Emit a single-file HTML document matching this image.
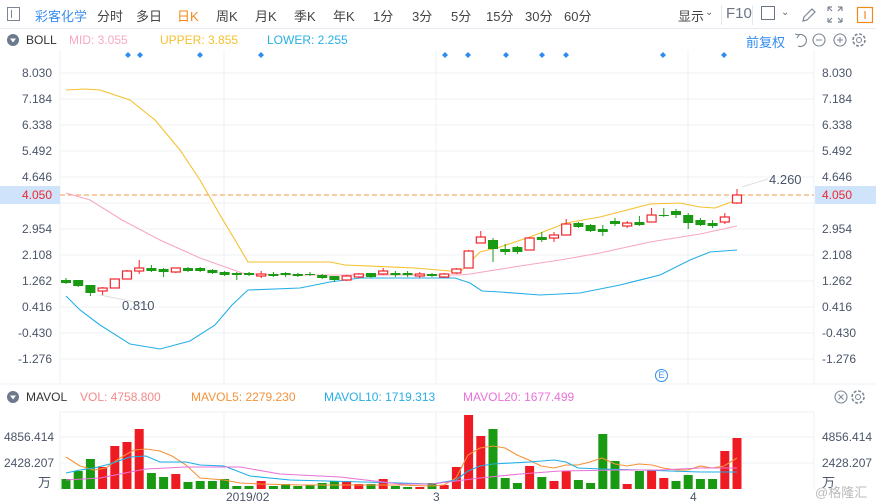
<!DOCTYPE html>
<html><head><meta charset="utf-8">
<style>
*{margin:0;padding:0;box-sizing:border-box}
body{width:876px;height:504px;overflow:hidden;background:#fff;font-family:"Liberation Sans","Noto Sans CJK SC",sans-serif;position:relative;color:#333}
.a{position:absolute;white-space:nowrap}
.top{font-size:13px;color:#444;top:6px}
.ax{font-size:12px;color:#4a5568}
.l{right:824px;text-align:right}
</style></head><body>
<!-- top bar -->
<div class="a" style="left:0;top:28px;width:876px;height:1px;background:#e6eaf0"></div>
<div class="a" style="left:7px;top:7px;width:13px;height:14px;border:1px solid #7b8694"></div>
<div class="a" style="left:11px;top:10px;width:1px;height:8px;background:#7b8694"></div>
<div class="a top" style="left:35px;color:#3b8ff0">彩客化学</div>
<div class="a top" style="left:97px">分时</div>
<div class="a top" style="left:136px">多日</div>
<div class="a top" style="left:177px;color:#f08a1c">日K</div>
<div class="a top" style="left:216px">周K</div>
<div class="a top" style="left:255px">月K</div>
<div class="a top" style="left:294px">季K</div>
<div class="a top" style="left:333px">年K</div>
<div class="a top" style="left:373px">1分</div>
<div class="a top" style="left:412px">3分</div>
<div class="a top" style="left:451px">5分</div>
<div class="a top" style="left:486px">15分</div>
<div class="a top" style="left:525px">30分</div>
<div class="a top" style="left:564px">60分</div>
<div class="a top" style="left:678px">显示</div>
<div class="a" style="left:705px;top:7px;font-size:10px;color:#666">⌄</div>
<div class="a" style="left:721px;top:5px;width:1px;height:20px;background:#e6eaf0"></div>
<div class="a top" style="left:726px;font-size:15px;top:5px;color:#6b7684">F10</div>
<div class="a" style="left:752px;top:5px;width:1px;height:20px;background:#e6eaf0"></div>
<div class="a" style="left:761px;top:6px;width:14px;height:14px;border:1px solid #6b7684"></div>
<div class="a" style="left:781px;top:7px;font-size:10px;color:#666">⌄</div>
<svg class="a" style="left:800px;top:4px" width="76" height="22">
<path d="M3 17 L4 13 L12 5 L15 8 L7 16 Z" fill="none" stroke="#7b8694" stroke-width="1.2"/>
<path d="M28 3v4M28 3h4M42 3h-4M42 3v4M28 18v-4M28 18h4M42 18h-4M42 18v-4M28 3l4 4M42 3l-4 4M28 18l4-4M42 18l-4-4" stroke="#7b8694" stroke-width="1.2" fill="none"/>
<rect x="57.5" y="3.5" width="15" height="15" fill="none" stroke="#f08a1c" stroke-width="1.2"/>
<line x1="65" y1="7" x2="65" y2="15" stroke="#f08a1c" stroke-width="1.2"/>
</svg>
<!-- BOLL row -->
<svg class="a" style="left:6px;top:33px" width="14" height="14"><circle cx="7" cy="7" r="6" fill="#6c7a8c"/><path d="M4 5.5h6L7 9.5z" fill="#fff"/></svg>
<div class="a" style="left:26px;top:33px;font-size:12px;color:#333">BOLL</div>
<div class="a" style="left:69px;top:33px;font-size:12px;color:#f7a8c2">MID: 3.055</div>
<div class="a" style="left:160px;top:33px;font-size:12px;color:#f5c12e">UPPER: 3.855</div>
<div class="a" style="left:267px;top:33px;font-size:12px;color:#27aee6">LOWER: 2.255</div>
<div class="a" style="left:746px;top:32px;font-size:13px;color:#2f8cf0">前复权</div>
<svg class="a" style="left:792px;top:31px" width="84" height="18">
<path d="M6 4 A6 6 0 1 1 6 15" fill="none" stroke="#7b8694" stroke-width="1.1"/><path d="M3 3 L7 4 L5 7" fill="none" stroke="#7b8694" stroke-width="1.1"/>
<circle cx="27" cy="9" r="6" fill="none" stroke="#7b8694" stroke-width="1.1"/><line x1="24" y1="9" x2="30" y2="9" stroke="#7b8694"/>
<circle cx="48" cy="9" r="6" fill="none" stroke="#7b8694" stroke-width="1.1"/><line x1="45" y1="9" x2="51" y2="9" stroke="#7b8694"/><line x1="48" y1="6" x2="48" y2="12" stroke="#7b8694"/>
<circle cx="67" cy="9" r="6" fill="none" stroke="#7b8694" stroke-width="1.6" stroke-dasharray="3 1.7"/><circle cx="67" cy="9" r="2.5" fill="none" stroke="#7b8694"/>
</svg>
<svg id="main" class="a" style="left:0;top:0" width="876" height="504"></svg>
<!-- axis labels -->
<div class="a" style="left:0;top:186px;width:60px;height:18px;background:#cfe4fb"></div>
<div class="a" style="left:815px;top:186px;width:61px;height:18px;background:#cfe4fb"></div>
<div id="labs"></div>
<div class="a ax" style="left:122px;top:298px;font-size:13px">0.810</div>
<div class="a ax" style="left:769px;top:172px;font-size:13px">4.260</div>
<!-- MAVOL row -->
<svg class="a" style="left:6px;top:390px" width="14" height="14"><circle cx="7" cy="7" r="6" fill="#6c7a8c"/><path d="M4 5.5h6L7 9.5z" fill="#fff"/></svg>
<div class="a" style="left:26px;top:390px;font-size:12px;color:#333">MAVOL</div>
<div class="a" style="left:80px;top:390px;font-size:12px;color:#f48a8a">VOL: 4758.800</div>
<div class="a" style="left:191px;top:390px;font-size:12px;color:#f5923a">MAVOL5: 2279.230</div>
<div class="a" style="left:324px;top:390px;font-size:12px;color:#27aee6">MAVOL10: 1719.313</div>
<div class="a" style="left:463px;top:390px;font-size:12px;color:#e872d8">MAVOL20: 1677.499</div>
<svg class="a" style="left:832px;top:388px" width="44" height="18">
<circle cx="9" cy="9" r="6" fill="none" stroke="#7b8694" stroke-width="1.1"/><path d="M6.5 6.5l5 5M11.5 6.5l-5 5" stroke="#7b8694"/>
<circle cx="26" cy="9" r="6" fill="none" stroke="#7b8694" stroke-width="1.6" stroke-dasharray="3 1.7"/><circle cx="26" cy="9" r="2.5" fill="none" stroke="#7b8694"/>
</svg>
<div class="a ax" style="left:4px;top:430px">4856.414</div>
<div class="a ax" style="left:4px;top:456px">2428.207</div>
<div class="a ax" style="left:38px;top:472px;font-size:13px">万</div>
<div class="a ax" style="left:822px;top:430px">4856.414</div>
<div class="a ax" style="left:822px;top:456px">2428.207</div>
<div class="a ax" style="left:822px;top:472px;font-size:13px">万</div>
<div class="a ax" style="left:226px;top:490px">2019/02</div>
<div class="a ax" style="left:433px;top:490px">3</div>
<div class="a ax" style="left:690px;top:490px">4</div>
<div class="a" style="left:815px;top:482px;font-size:13px;color:#bbb">@格隆汇</div>
<div class="a" style="left:655px;top:369px;width:13px;height:13px;border:1px solid #2f8cf0;border-radius:50%;font-size:9px;color:#2f8cf0;text-align:center;line-height:11px">E</div>
<script>
var S='',ns='';
function X(i){return 66+12.2*i}
// grid
var labs=['8.030','7.184','6.338','5.492','4.646','3.800','2.954','2.108','1.262','0.416','-0.430','-1.276'];
var L='';
for(var k=0;k<12;k++){var y=73+26*k;S+='<line x1="60" x2="814" y1="'+y+'" y2="'+y+'" stroke="#eef1f5"/>';
 if(k!=5){L+='<div class="a ax" style="right:824px;top:'+(y-7)+'px">'+labs[k]+'</div><div class="a ax" style="left:822px;top:'+(y-7)+'px">'+labs[k]+'</div>';}}
L+='<div class="a" style="right:824px;top:188px;font-size:12px;color:#f0262b">4.050</div><div class="a" style="left:822px;top:188px;font-size:12px;color:#f0262b">4.050</div>';
document.getElementById('labs').innerHTML=L;
[60,224,436,688,814].forEach(function(x){S+='<line x1="'+x+'" x2="'+x+'" y1="50" y2="384" stroke="#eef1f5"/><line x1="'+x+'" x2="'+x+'" y1="412" y2="490" stroke="#eef1f5"/>'});
S+='<line x1="0" x2="876" y1="384" y2="384" stroke="#eef1f5"/><line x1="60" x2="814" y1="437" y2="437" stroke="#eef1f5"/><line x1="60" x2="814" y1="463" y2="463" stroke="#eef1f5"/><line x1="60" x2="814" y1="412" y2="412" stroke="#eef1f5"/>';
// dashed
S+='<line x1="60" x2="814" y1="195" y2="195" stroke="#f09a4a" stroke-dasharray="5 3"/>';
S+='<line x1="100" y1="295" x2="150" y2="305" stroke="#ddd"/><line x1="742" y1="187" x2="768" y2="179" stroke="#ddd"/>';
// diamonds
[128,140,200,261,445,468,506,542,566,663,724].forEach(function(x){S+='<path d="M'+x+' 52l3 3-3 3-3-3z" fill="#2f8cf0"/>'});
function pl(pts,c){S+='<polyline fill="none" stroke="'+c+'" stroke-width="1.1" points="'+pts+'"/>'}
pl('66,90 85,89 100,90 130,100 155,120 180,150 200,180 220,215 235,240 248,262 330,262 345,265 415,268 450,271 462,270 470,262 480,252 500,247 530,237 566,223 600,217 650,204 680,203 700,207 715,208 737,200','#f5c12e');
pl('66,193 90,200 122,220 160,240 200,258 228,268 245,274 300,275 460,275 470,274 520,266 560,260 600,253 650,242 700,234 737,226','#f7a8c2');
pl('66,296 80,310 100,325 130,344 160,349 190,341 215,325 232,305 248,290 300,288 330,282 360,278 455,278 470,283 482,291 500,292 540,295 580,293 620,285 660,275 690,260 710,252 737,250','#27aee6');
// candles: [type(r/g), top, bottom, wickTop, wickBot]
var C=[['g',280,283,278,284],['g',280,286,280,287],['g',285,293,285,296],['r',288,291,287,295],['r',279,288,279,288],['r',271,279,270,279],['r',268,271,260,274],['g',268,271,265,272],['g',269,272,268,277],['r',268,272,268,273],['g',268,271,267,272],['g',268,271,267,272],['g',270,273,269,274],['g',272,275,271,276],['g',273,275,272,280],['g',273,275,272,276],['r',274,276,271,278],['g',274,276,272,277],['g',273,275,272,277],['g',274,276,273,277],['g',274,275,272,276],['g',275,278,274,279],['g',276,280,276,282],['r',276,280,275,281],['r',274,277,273,278],['g',273,277,273,278],['r',271,274,268,275],['g',273,275,271,277],['g',273,275,271,277],['r',274,276,272,278],['g',274,276,273,277],['r',274,277,273,278],['r',269,273,268,274],['r',251,268,250,268],['r',237,243,231,243],['g',240,249,238,262],['g',249,252,244,255],['g',247,252,246,254],['r',238,250,237,250],['g',237,240,232,242],['r',235,238,232,242],['r',224,235,219,235],['g',223,227,222,228],['g',225,231,224,232],['g',229,232,225,236],['g',221,224,218,226],['r',223,226,221,228],['g',222,225,216,226],['r',215,222,208,222],['g',215,216,208,217],['g',211,215,209,218],['g',215,223,213,229],['g',220,225,218,226],['g',223,226,220,228],['r',217,222,213,224],['r',195,203,189,204]];
C.forEach(function(c,i){var x=X(i);var col=c[0]=='r'?'#f0262b':'#1a9a12';
 S+='<line x1="'+x+'" x2="'+x+'" y1="'+c[3]+'" y2="'+c[4]+'" stroke="'+col+'"/>';
 var h=Math.max(c[2]-c[1],1);
 if(c[0]=='r')S+='<rect x="'+(x-4.5)+'" y="'+c[1]+'" width="9" height="'+h+'" fill="#fff" stroke="'+col+'" stroke-width="1.2"/>';
 else S+='<rect x="'+(x-5)+'" y="'+c[1]+'" width="10" height="'+h+'" fill="'+col+'"/>';});
// volume
var V='gggrrrrggrggggggrggggggrrgrggrgrrrrgggrgrrgggggrgrrgggrr'.split('');
var VT=[479,471,459,467,446,442,429,473,477,474,482,481,481,479,486,486,481,486,484,486,485,483,481,481,484,484,479,486,487,487,483,485,467,415,436,429,478,483,466,477,481,471,480,483,434,461,484,471,470,478,481,475,479,479,451,438];
var VC=['g','g','g','r','r','r','r','g','g','r','g','g','g','g','g','g','r','g','g','g','g','g','g','r','r','g','r','g','g','r','g','r','r','r','r','g','g','g','r','g','r','r','g','g','g','g','r','g','r','r','g','g','g','g','r','r'];
VT.forEach(function(t,i){var x=X(i);S+='<rect x="'+(x-4.5)+'" y="'+t+'" width="9" height="'+(489-t)+'" fill="'+(VC[i]=='r'?'#ee1c22':'#1a9a12')+'"/>'});
pl('66,457 80,466 94,470 106,468 120,458 134,450 146,449 160,451 172,456 186,465 200,478 224,480 240,483 260,484 300,485 400,485 432,486 444,485 456,478 468,455 480,448 493,446 505,448 517,455 529,460 541,466 554,468 566,465 578,465 590,462 602,458 615,464 627,466 639,464 652,465 663,468 676,470 688,470 700,466 712,468 724,466 737,458','#f5923a');
pl('66,473 80,470 94,468 110,464 130,457 146,456 160,462 186,462 200,465 224,466 250,476 290,480 400,483 432,484 456,480 468,471 480,466 493,464 529,462 554,460 566,462 578,468 602,469 640,470 700,472 737,472','#1eaee6');
pl('66,480 100,478 130,472 146,469 186,467 240,467 280,474 340,477 400,484 432,484 480,478 520,474 560,471 620,470 660,470 700,468 737,468','#e872d8');
document.getElementById('main').innerHTML=S;
</script>
</body></html>
